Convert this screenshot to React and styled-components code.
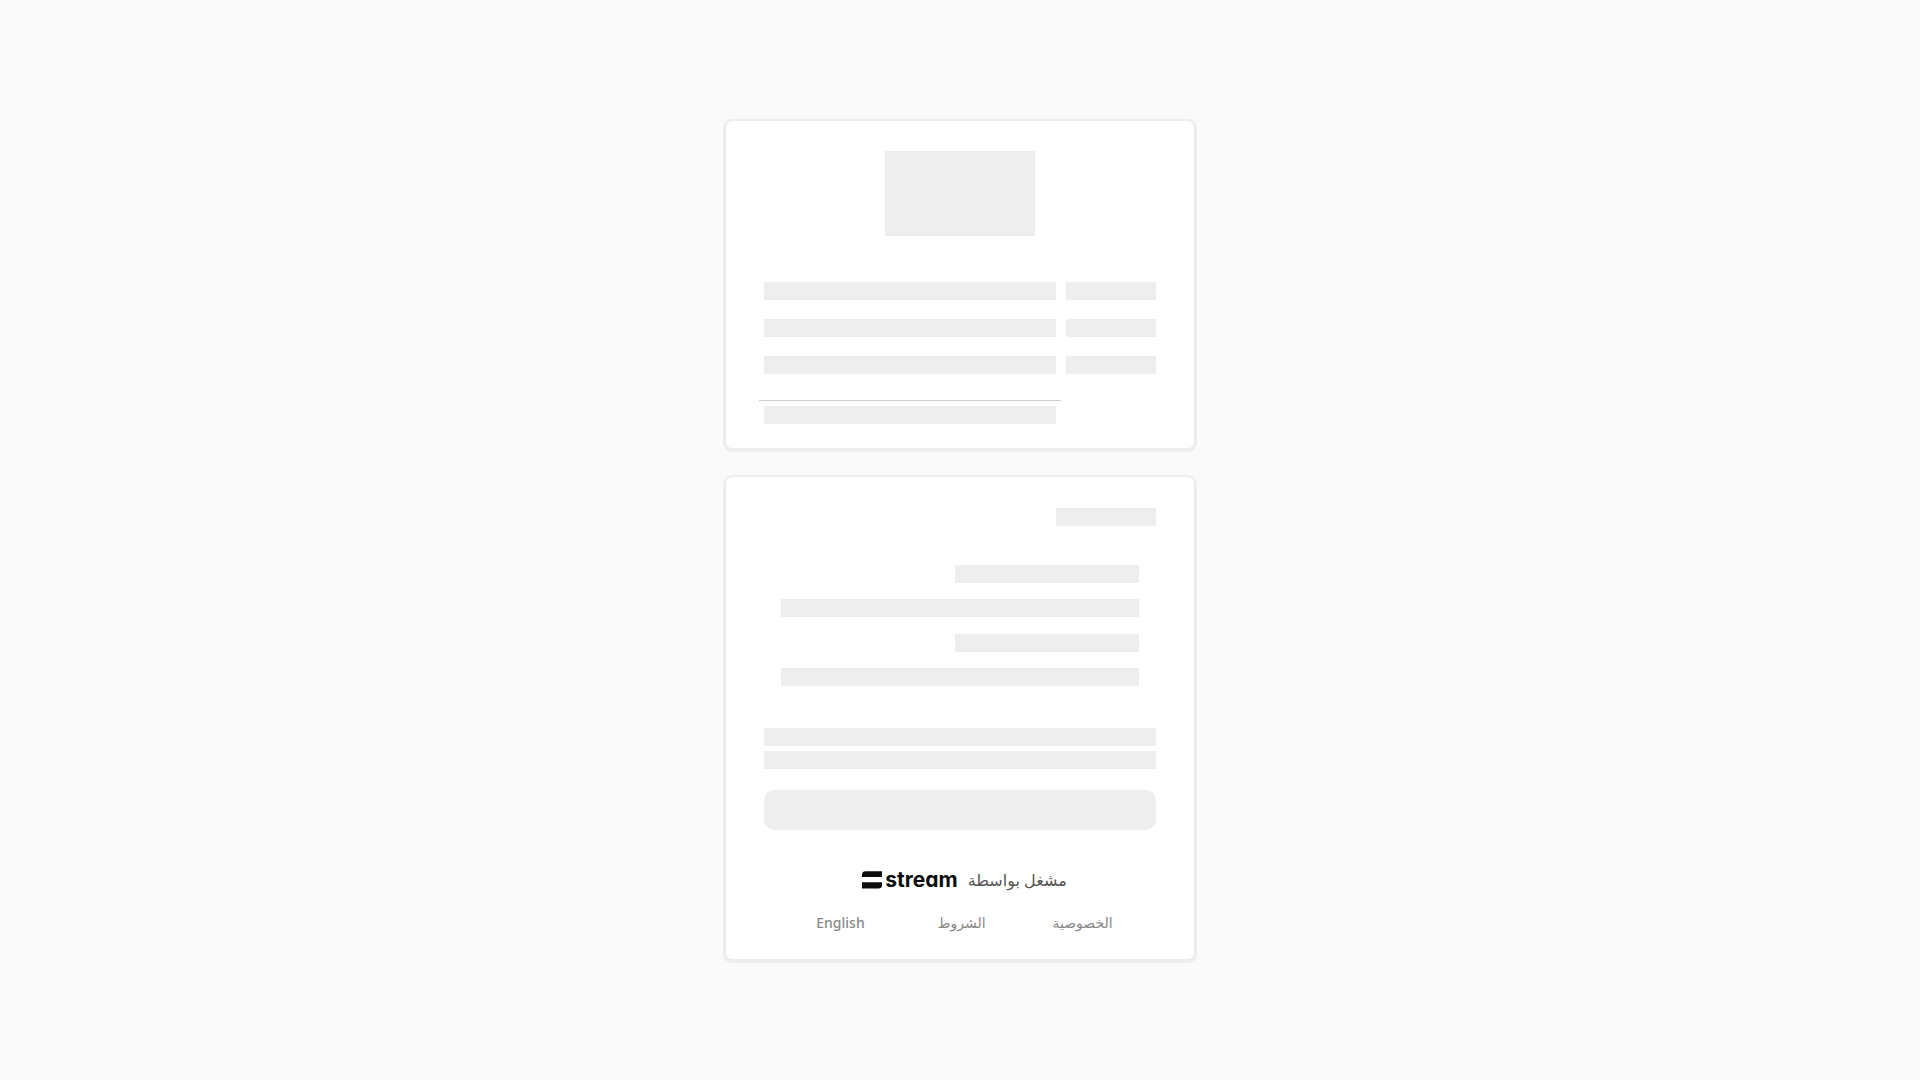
import React from 'react'
import styled, { createGlobalStyle } from 'styled-components'

const GlobalStyle = createGlobalStyle`
  * {
    box-sizing: border-box;
  }

  body {
    margin: 0;
    background: #fafafa;
    font-family: 'Noto Sans', 'DejaVu Sans', sans-serif;
  }
`

const Page = styled.main`
  min-height: 100vh;
  padding: 24px;
  display: flex;
  flex-direction: column;
  align-items: center;
  justify-content: center;
  gap: 29px;
`

const Card = styled.section`
  width: 100%;
  max-width: 468px;
  padding: 30px 38px 24px;
  display: flex;
  flex-direction: column;
  background: #fff;
  border-radius: 6px;
  box-shadow: 0 1px 0 3px #ededed;
`

const PaymentCard = styled(Card)`
  padding: 31px 38px 24px;
`

const Bone = styled.div`
  width: ${({ $width }) => $width || '100%'};
  height: 18px;
  background: #eee;
`

const LogoBone = styled(Bone)`
  height: 85px;
  align-self: center;
`

const Rows = styled.div`
  margin-top: 46px;
  display: flex;
  flex-direction: column;
  gap: 19px;
`

const Row = styled.div`
  display: grid;
  grid-template-columns: 90px 1fr;
  gap: 10px;
`

const Total = styled.div`
  margin: 26px 95px 0 -5px;
  padding: 5px 5px 0;
  border-top: 1px solid #ccc;
`

const Fields = styled.div`
  margin: 39px 17px 0;
  display: flex;
  flex-direction: column;
  gap: 17px;
`

const Field = styled.div`
  display: flex;
  flex-direction: column;
  gap: 16px;
`

const Notes = styled.div`
  margin-top: 42px;
  display: flex;
  flex-direction: column;
  gap: 5px;
`

const ButtonBone = styled(Bone)`
  height: 40px;
  margin-top: 21px;
  border-radius: 10px;
`

const Powered = styled.div`
  margin-top: 36px;
  padding-left: 9px;
  display: flex;
  align-items: center;
  justify-content: center;
  gap: 10px;
  color: #555;
  font-size: 16px;
  line-height: 28px;
`

const Brand = styled.span`
  display: flex;
  align-items: center;
  gap: 3px;
  direction: ltr;
  color: #0b0d0d;
`

const BrandName = styled.span`
  font-family: Inter, sans-serif;
  font-size: 21px;
  font-weight: 700;
  line-height: 24px;
  font-feature-settings: 'cv11';
`

const Footer = styled.nav`
  margin: 17px 13px 0 16px;
  display: grid;
  grid-template-columns: repeat(3, 1fr);
  justify-items: center;
`

const footerItem = `
  padding: 0;
  border: 0;
  background: none;
  color: #888;
  font-family: inherit;
  font-size: 14px;
  font-weight: 500;
  line-height: 24px;
  text-decoration: none;
`

const FooterLink = styled.a`
  ${footerItem}
`

const LanguageButton = styled.button`
  ${footerItem}
  cursor: pointer;
`

function StreamLogo() {
  return (
    <Brand>
      <svg width="20" height="18" viewBox="0 0 20 18" fill="currentColor" aria-hidden="true">
        <path d="M3.5 0.3H20V6H0V3.8A3.5 3.5 0 0 1 3.500 0.300Z" />
        <path d="M0 11.3H20V14A3.5 3.5 0 0 1 16.5 17.5H0Z" />
      </svg>
      <BrandName>stream</BrandName>
    </Brand>
  )
}

function SummarySkeleton() {
  return (
    <Card aria-busy="true">
      <LogoBone $width="150px" />
      <Rows>
        {[0, 1, 2].map(row => (
          <Row key={row}>
            <Bone />
            <Bone />
          </Row>
        ))}
      </Rows>
      <Total>
        <Bone />
      </Total>
    </Card>
  )
}

function PaymentSkeleton() {
  return (
    <PaymentCard aria-busy="true">
      <Bone $width="100px" />
      <Fields>
        {[0, 1].map(field => (
          <Field key={field}>
            <Bone $width="184px" />
            <Bone />
          </Field>
        ))}
      </Fields>
      <Notes>
        <Bone />
        <Bone />
      </Notes>
      <ButtonBone />
      <Powered>
        <span>مشغل بواسطة</span>
        <StreamLogo />
      </Powered>
      <Footer>
        <FooterLink href="#privacy">الخصوصية</FooterLink>
        <FooterLink href="#terms">الشروط</FooterLink>
        <LanguageButton type="button" lang="en">English</LanguageButton>
      </Footer>
    </PaymentCard>
  )
}

function App() {
  return (
    <>
      <GlobalStyle />
      <Page dir="rtl" lang="ar">
        <SummarySkeleton />
        <PaymentSkeleton />
      </Page>
    </>
  )
}

export default App
